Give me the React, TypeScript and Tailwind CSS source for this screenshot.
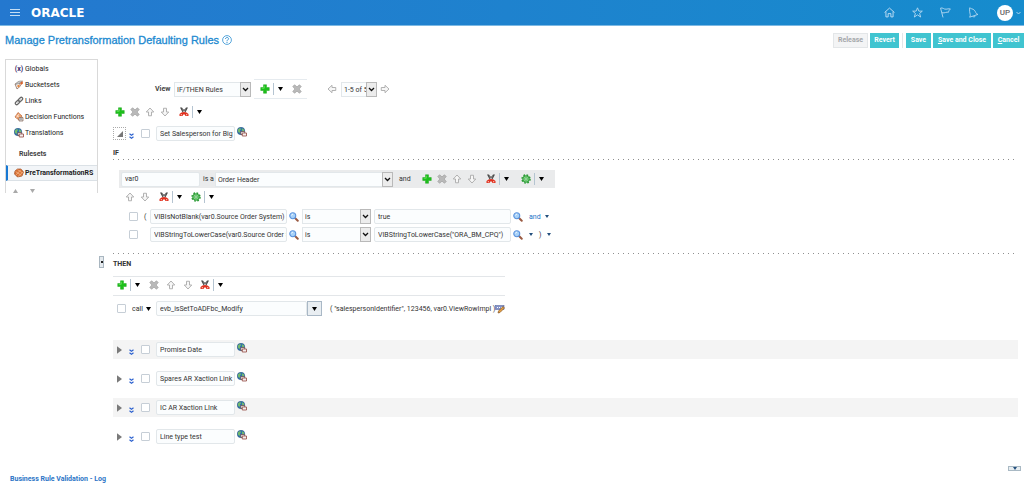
import type { ReactNode } from "react";
import clsx from "clsx";

type IconProps = { className?: string };

/* ---------- icons ---------- */

const PlusIcon = () => (
  <svg viewBox="0 0 20 20" className="size-2.5">
    <path
      d="M7 1.500h6V7h5.500v6H13v5.500H7V13H1.500V7H7z"
      fill="#1cc01a"
      stroke="#22a522"
      strokeWidth="1"
      strokeLinejoin="round"
    />
    <path d="M8.500 3.500v5h-5" fill="none" stroke="#6fe565" strokeWidth="1.6" />
  </svg>
);

const DeleteIcon = () => (
  <svg viewBox="0 0 20 20" className="size-2.5">
    <path
      d="M1.500 5L5 1.500l5 4.200 5-4.200L18.500 5l-4.200 5 4.200 5-3.500 3.500-5-4.200-5 4.200L1.500 15l4.200-5z"
      fill="#b9b9b9"
      stroke="#8f8f8f"
      strokeWidth="1"
    />
  </svg>
);

const ArrowIcon = ({ className }: IconProps) => (
  <svg viewBox="0 0 20 20" className={clsx("size-2.5", className)}>
    <path
      d="M10 2l7.5 8H13v7.5H7V10H2.5z"
      fill="#f7f7f7"
      stroke="#a9a9a9"
      strokeWidth="1.8"
      strokeLinejoin="round"
    />
  </svg>
);

const ScissorsIcon = () => (
  <svg viewBox="0 0 20 20" className="size-2.5">
    <path d="M2 1h4l6.500 10-4 2.500zM18 1h-4L7.500 11l4 2.500z" fill="#4c4c4c" />
    <path d="M7 4h6v3H7z" fill="#8a8a8a" />
    <path d="M1 18v-4l4-3 5-1 5 1 4 3v4h-6l-1.500-3h-3L7 18z" fill="#e0301e" />
    <path d="M3.500 14.500h2.500v2H3.500zM14 14.500h2.500v2H14z" fill="#ffd8d0" />
  </svg>
);

const GearIcon = () => (
  <svg viewBox="0 0 20 20" className="size-2.5">
    <circle
      cx="10"
      cy="10"
      r="8"
      fill="none"
      stroke="#2a9a34"
      strokeWidth="3"
      strokeDasharray="3.4 2.9"
    />
    <circle cx="10" cy="10" r="6.5" fill="#7fd483" stroke="#2a9a34" strokeWidth="2" />
    <circle cx="10" cy="10" r="2.4" fill="#e6f8e6" stroke="#2a9a34" strokeWidth="1.2" />
  </svg>
);

const SearchIcon = () => (
  <svg viewBox="0 0 20 20" className="size-2.5">
    <path d="M12 12l5.5 5.5" stroke="#9a5a42" strokeWidth="4" strokeLinecap="round" />
    <circle cx="7.5" cy="7.5" r="6" fill="#a9d2f8" stroke="#5b93dd" strokeWidth="2.2" />
    <path d="M5 7a3 3 0 013-2.6" fill="none" stroke="#fff" strokeWidth="1.5" />
  </svg>
);

const GlobeIcon = () => (
  <svg viewBox="0 0 20 20" className="size-2.5 shrink-0">
    <circle cx="8" cy="8" r="7.500" fill="#2f72ad" stroke="#24527d" strokeWidth="1" />
    <path d="M2 5c3-4 6-3 6-1s-3 2-2 5-3 3-4 0zM10 3c3 0 5 3 4 5s-4 0-4-2z" fill="#74bd6a" />
    <path d="M7.500 9h8v6h-8z" fill="#e9e4e4" stroke="#6a4545" strokeWidth="1.4" />
    <path d="M10.500 12H19v6h-8.500z" fill="#f4eeee" stroke="#93463f" strokeWidth="1.6" />
  </svg>
);

const BucketIcon = () => (
  <svg viewBox="0 0 20 20" className="size-2.5 shrink-0">
    <path d="M2 8l8-4 3 8-7 6z" fill="#eee" stroke="#8b5e4a" strokeWidth="1.4" />
    <path d="M3 9c2-5 7-8 14-7l-5 4z" fill="#c7c7c7" stroke="#777" />
    <path d="M12 6l5-4 1 5-4 3z" fill="#d6602b" />
    <circle cx="9" cy="12" r="2.4" fill="#e8873d" />
  </svg>
);

const LinkIcon = () => (
  <svg viewBox="0 0 20 20" className="size-2.5 shrink-0">
    <g fill="none" stroke="#686868" strokeWidth="2.4">
      <rect x="-5" y="-2.8" width="10" height="5.6" rx="2.8" transform="translate(7 13) rotate(-45)" />
      <rect x="-5" y="-2.8" width="10" height="5.6" rx="2.8" transform="translate(13 7) rotate(-45)" />
    </g>
    <path d="M7 13l6-6" stroke="#999" strokeWidth="1.6" />
  </svg>
);

const DecisionIcon = () => (
  <svg viewBox="0 0 20 20" className="size-2.5 shrink-0">
    <path d="M8 1l8 7-6 8-8-6z" fill="#eea16c" stroke="#b96333" strokeWidth="1.4" />
    <path d="M5 6l7 6M10 4l-5 7" stroke="#fff" strokeWidth="1.2" />
    <path d="M10 11h8v7h-8z" fill="#ddd" stroke="#7a5a4a" strokeWidth="1.3" />
    <path d="M12 14h4" stroke="#555" strokeWidth="1.3" />
  </svg>
);

const RulesetIcon = () => (
  <svg viewBox="0 0 20 20" className="size-2.5 shrink-0">
    <path d="M7 2h7l5 6-3 8-9 2-6-6 1-6z" fill="#d97337" stroke="#994318" strokeWidth="1.3" />
    <path d="M3 7l12 8M7 3l10 7M14 3L4 14M18 8L8 17" stroke="#ffd2ab" strokeWidth="1" />
  </svg>
);

const EditIcon = () => (
  <svg viewBox="0 0 20 20" className="size-2.5">
    <rect x="1" y="3" width="17" height="8" fill="#8493c9" stroke="#4b5993" />
    <path d="M4 6h2v2H4zM8 6h2v2H8zM12 6h2v2h-2z" fill="#fff" />
    <path d="M16 5l3 3-9 9-4 1 1-4z" fill="#e5a043" stroke="#74451a" strokeWidth="1.2" />
  </svg>
);

const DoubleChevron = () => (
  <svg viewBox="0 0 10 12" className="h-1.5 w-[5px]">
    <path d="M1 1.500L5 4.500l4-3M1 7.500l4 3 4-3" fill="none" stroke="#2d62cf" strokeWidth="2.4" />
  </svg>
);

const Caret = ({ className }: IconProps) => (
  <svg viewBox="0 0 10 8" className={clsx("h-1 w-[5px]", className)}>
    <path d="M0 0h10L5 8z" fill="currentColor" />
  </svg>
);

const SmallCaret = () => (
  <svg viewBox="0 0 8 6" className="h-[3px] w-1 text-[#234f7d]">
    <path d="M0 0h8L4 6z" fill="currentColor" />
  </svg>
);

/* ---------- controls ---------- */

function IconButton({ label, children, className }: { label: string; children: ReactNode; className?: string }) {
  return (
    <button type="button" aria-label={label} className={clsx("flex shrink-0 items-center justify-center", className)}>
      {children}
    </button>
  );
}

function MenuButton({ label, children }: { label: string; children: ReactNode }) {
  return (
    <div className="flex shrink-0 items-center">
      <IconButton label={label}>{children}</IconButton>
      <span className="ml-[3px] h-3 w-px bg-[#b5c4d1]" />
      <IconButton label={`${label} menu`} className="ml-1">
        <Caret className="text-black" />
      </IconButton>
    </div>
  );
}

function Field({ label, value, className }: { label: string; value: string; className: string }) {
  return (
    <input
      aria-label={label}
      defaultValue={value}
      className={clsx(
        "h-[15px] shrink-0 rounded-xs border border-[#e2e7ea] bg-[#fbfdfe] pl-[3px] leading-[13px] text-[#333] outline-none",
        className
      )}
    />
  );
}

function Dropdown({ label, value, className }: { label: string; value: string; className: string }) {
  return (
    <div className={clsx("relative flex h-[15px] shrink-0", className)}>
      <select
        aria-label={label}
        className="h-full w-full appearance-none border border-[#e2e7ea] bg-[#fbfdfe] pt-px pr-0 pl-0.5 leading-3 text-[#333] outline-none"
      >
        <option>{value}</option>
      </select>
      <span className="pointer-events-none absolute inset-y-0 right-0 flex w-[11px] items-center justify-center border border-[#b9b9b9] bg-[#ececec]">
        <svg viewBox="0 0 14 10" className="h-[5px] w-[7px]">
          <path d="M2 2l5 5 5-5" fill="none" stroke="#111" strokeWidth="2.6" />
        </svg>
      </span>
    </div>
  );
}

function Check({ label, className }: { label: string; className?: string }) {
  return (
    <input
      type="checkbox"
      aria-label={label}
      className={clsx("size-[9px] shrink-0 appearance-none rounded-[1px] border border-[#c6ced6] bg-white", className)}
    />
  );
}

const Dots = () => (
  <div className="h-px bg-[linear-gradient(to_right,#8f8f8f_1px,transparent_1px)] bg-[length:5px_1px]" />
);

/* ---------- data ---------- */

const navItems = [
  { label: "Globals", icon: <span className="w-2.5 text-center font-bold text-[#3b2a6b]">(x)</span> },
  { label: "Bucketsets", icon: <BucketIcon /> },
  { label: "Links", icon: <LinkIcon /> },
  { label: "Decision Functions", icon: <DecisionIcon /> },
  { label: "Translations", icon: <GlobeIcon /> },
];

const rules = ["Promise Date", "Spares AR Xaction Link", "IC AR Xaction LInk", "Line type test"];

/* ---------- page parts ---------- */

function Header() {
  return (
    <header className="flex h-[26px] items-center border-b border-[#7db9e3] bg-linear-to-r from-[#2478cf] to-[#168ccd] pr-[3px] pl-2.5 text-white">
      <button type="button" aria-label="Navigator" className="flex w-2.5 flex-col gap-0.5">
        <span className="h-px bg-[#c5def4]" />
        <span className="h-px bg-[#c5def4]" />
        <span className="h-px bg-[#c5def4]" />
      </button>
      <a href="#" className="ml-[11px] font-['DejaVu_Sans',sans-serif] text-[12px] leading-3 font-bold">
        ORACLE
      </a>
      <div className="ml-auto flex items-center">
        <div className="flex gap-[17px]">
          <IconButton label="Home">
            <svg viewBox="0 0 20 20" className="size-[11px]">
              <path
                d="M1 10l9-8 9 8M3.500 8.500V18H7.500v-6h5v6h4V8.500"
                fill="none"
                stroke="#b9dbf3"
                strokeWidth="1.8"
              />
            </svg>
          </IconButton>
          <IconButton label="Favorites">
            <svg viewBox="0 0 20 20" className="size-[11px]">
              <path
                d="M10 1.5l2.5 6h6.3l-5 4.2 2 6.6-5.8-4-5.8 4 2-6.6-5-4.2h6.3z"
                fill="none"
                stroke="#b9dbf3"
                strokeWidth="1.6"
              />
            </svg>
          </IconButton>
          <IconButton label="Watchlist">
            <svg viewBox="0 0 20 20" className="size-[11px]">
              <path
                d="M5.5 19L1 2c4-1.500 6 2.500 10 2 2.500-.3 4-1 8-.5-2 2-3 3-3.500 6-4-1-6 2-12 1"
                fill="none"
                stroke="#b9dbf3"
                strokeWidth="1.6"
              />
            </svg>
          </IconButton>
          <IconButton label="Notifications">
            <svg viewBox="0 0 20 20" className="size-[11px]">
              <path
                d="M3 1.500c1 0 1.500 1 3 1.500 5 1 7 4 8 7 .5 2 2 2.500 4 3.500L3 18.500c1-2 1.500-3 1-5C3 10 2.500 6 3 1.500zM9 17c1 2 3 2 4-.8"
                fill="none"
                stroke="#b9dbf3"
                strokeWidth="1.6"
              />
            </svg>
          </IconButton>
        </div>
        <button type="button" aria-label="User menu" className="ml-[18px] flex items-center gap-[3px]">
          <span className="flex size-4 items-center justify-center rounded-full bg-white text-[8px] font-medium text-[#666]">
            UP
          </span>
          <svg viewBox="0 0 10 8" className="h-1 w-[5px]">
            <path d="M1 2l4 4 4-4" fill="none" stroke="#b9dbf3" strokeWidth="1.8" />
          </svg>
        </button>
      </div>
    </header>
  );
}

function TitleBar() {
  const action = "h-[15px] bg-[#40c4d0] text-white font-bold";
  return (
    <div className="flex h-7 items-center pl-[5px]">
      <h1 className="font-['Liberation_Sans',Arial,sans-serif] text-[11px] text-[#2189d0] [-webkit-text-stroke:0.3px_#2189d0]">
        Manage Pretransformation Defaulting Rules
      </h1>
      <button type="button" aria-label="Help" className="ml-[3px]">
        <svg viewBox="0 0 20 20" className="size-2.5">
          <circle cx="10" cy="10" r="8.800" fill="none" stroke="#2189d0" strokeWidth="1.5" />
          <path d="M7 8c0-4 6-4 6-.5 0 2-3 2.500-3 5M10 14v2" fill="none" stroke="#2189d0" strokeWidth="1.8" />
        </svg>
      </button>
      <div className="ml-auto flex items-center gap-0.5">
        <button type="button" disabled className="h-[15px] w-[35px] border border-[#e3e6e8] bg-[#f3f4f5] font-bold text-[#a5a8ab]">
          Release
        </button>
        <button type="button" className={clsx(action, "w-[29px]")}>
          Revert
        </button>
        <span className="mx-px h-[15px] w-px bg-[#e3e6e8]" />
        <button type="button" className={clsx(action, "w-[25px]")}>
          Save
        </button>
        <button type="button" className={clsx(action, "w-[58px]")}>
          <u>S</u>ave and Close
        </button>
        <button type="button" className={clsx(action, "w-[31px]")}>
          <u>C</u>ancel
        </button>
      </div>
    </div>
  );
}

function Sidebar() {
  return (
    <nav className="mt-[5px] ml-[5px] h-[134px] w-[93px] shrink-0 overflow-hidden border border-b-0 border-[#d9d9d9] text-[#222]">
      <ul>
        {navItems.map((item) => (
          <li key={item.label} className="h-4 pt-px">
            <a href="#" className="flex h-4 items-center gap-px pl-2">
              {item.icon}
              {item.label}
            </a>
          </li>
        ))}
      </ul>
      <p className="mt-1.5 flex h-4 items-center pl-[13px] font-bold text-[#444]">Rulesets</p>
      <a
        href="#"
        className="mt-[3px] flex h-4 items-center gap-px border-y border-l-2 border-y-[#dbe1e6] border-l-[#1778d3] bg-[#f2f5f8] pl-1.5 font-bold whitespace-nowrap"
      >
        <RulesetIcon />
        PreTransformationRS
      </a>
      <div className="mt-2 flex gap-3 pl-[7px] text-[#a9a9a9]">
        <IconButton label="Move up">
          <Caret className="rotate-180" />
        </IconButton>
        <IconButton label="Move down">
          <Caret />
        </IconButton>
      </div>
    </nav>
  );
}

function ViewBar() {
  return (
    <div className="flex h-5 items-center pl-[42px]">
      <span className="w-[19px] font-bold text-[#444]">View</span>
      <Dropdown label="View" value="IF/THEN Rules" className="w-[77px]" />
      <div className="ml-[3px] flex h-5 w-[53px] items-center gap-[9px] border-y border-[#e6ebef] pl-1.5">
        <MenuButton label="Add rule">
          <PlusIcon />
        </MenuButton>
        <IconButton label="Delete rule">
          <DeleteIcon />
        </IconButton>
      </div>
      <IconButton label="Previous page" className="ml-5">
        <ArrowIcon className="-rotate-90" />
      </IconButton>
      <Dropdown label="Page" value="1-5 of 5" className="ml-1 w-9" />
      <IconButton label="Next page" className="ml-[3px]">
        <ArrowIcon className="rotate-90" />
      </IconButton>
    </div>
  );
}

function MoveButtons() {
  return (
    <>
      <IconButton label="Move up">
        <ArrowIcon />
      </IconButton>
      <IconButton label="Move down">
        <ArrowIcon className="rotate-180" />
      </IconButton>
    </>
  );
}

function EditTools() {
  return (
    <>
      <IconButton label="Add">
        <PlusIcon />
      </IconButton>
      <IconButton label="Delete">
        <DeleteIcon />
      </IconButton>
      <MoveButtons />
    </>
  );
}

function RuleRow({ name, open, shaded }: { name: string; open?: boolean; shaded?: boolean }) {
  return (
    <div className={clsx("flex h-[19px] items-center", shaded && "bg-[#f4f4f4]")}>
      <IconButton
        label={open ? "Collapse rule" : "Expand rule"}
        className={clsx("h-[13px] w-[13px]", open && "border border-dotted border-[#aaa]")}
      >
        {open ? (
          <svg viewBox="0 0 10 10" className="size-1.5">
            <path d="M10 0v10H0z" fill="#777" />
          </svg>
        ) : (
          <svg viewBox="0 0 8 12" className="h-2 w-[5px]">
            <path d="M0 0l8 6-8 6z" fill="#7a7a7a" />
          </svg>
        )}
      </IconButton>
      <IconButton label="Show advanced settings" className="mt-1 ml-[3px]">
        <DoubleChevron />
      </IconButton>
      <Check label={`Select ${name}`} className="ml-[7px]" />
      <Field label="Rule name" value={name} className="ml-1.5 w-[79px]" />
      <IconButton label="Translate" className="mb-[3px] ml-0.5">
        <GlobeIcon />
      </IconButton>
    </div>
  );
}

function Condition({ left, right, open, children }: { left: string; right: string; open: string; children: ReactNode }) {
  return (
    <div className="flex h-[17px] items-center pl-4">
      <Check label="Select condition" />
      <span className="w-3 pl-1.5">{open}</span>
      <Field label="Left operand" value={left} className="w-[137px]" />
      <IconButton label="Find left operand" className="ml-0.5">
        <SearchIcon />
      </IconButton>
      <Dropdown label="Operator" value="is" className="ml-[3px] w-[69px]" />
      <Field label="Right operand" value={right} className="ml-[3px] w-[137px]" />
      <IconButton label="Find right operand" className="ml-0.5">
        <SearchIcon />
      </IconButton>
      {children}
    </div>
  );
}

function IfSection() {
  return (
    <section>
      <h2 className="flex h-4 items-end pb-px font-bold">IF</h2>
      <Dots />
      <div className="mt-2.5 ml-1.5 flex h-[18px] w-[436px] items-center bg-[#eaebec] pl-0.5">
        <Field label="Variable" value="var0" className="w-[79px]" />
        <span className="w-[15px] pl-[3px] whitespace-nowrap">is a</span>
        <Dropdown label="Fact type" value="Order Header" className="w-[178px]" />
        <span className="w-[29px] pl-1.5">and</span>
        <div className="flex items-center gap-[5px]">
          <EditTools />
          <div className="ml-1 flex gap-3">
            <MenuButton label="Cut">
              <ScissorsIcon />
            </MenuButton>
            <MenuButton label="Settings">
              <GearIcon />
            </MenuButton>
          </div>
        </div>
      </div>
      <div className="flex h-[17px] items-center gap-[5px] pl-3">
        <MoveButtons />
        <div className="ml-1 flex gap-[9px]">
          <MenuButton label="Cut">
            <ScissorsIcon />
          </MenuButton>
          <MenuButton label="Settings">
            <GearIcon />
          </MenuButton>
        </div>
      </div>
      <div className="mt-[3px] mb-2.5 flex flex-col gap-px">
        <Condition left="VIBIsNotBlank(var0.Source Order System)" right="true" open="(">
          <button type="button" className="ml-1.5 flex items-center gap-1 text-[#2173c7]">
            and
            <SmallCaret />
          </button>
        </Condition>
        <Condition left="VIBStringToLowerCase(var0.Source Order S" right={'VIBStringToLowerCase("ORA_BM_CPQ")'} open="">
          <div className="ml-1.5 flex items-center gap-1.5">
            <IconButton label="Connective">
              <SmallCaret />
            </IconButton>
            )
            <IconButton label="Parenthesis">
              <SmallCaret />
            </IconButton>
          </div>
        </Condition>
      </div>
      <Dots />
    </section>
  );
}

function ThenSection() {
  return (
    <section className="mt-0.5">
      <h2 className="flex h-4 items-center font-bold">THEN</h2>
      <div className="mt-1 flex h-5 w-[392px] items-center border-y border-[#e3e6e9] pb-[3px] pl-1">
        <MenuButton label="Add action">
          <PlusIcon />
        </MenuButton>
        <div className="ml-[9px] flex gap-[7px]">
          <IconButton label="Delete">
            <DeleteIcon />
          </IconButton>
          <MoveButtons />
          <MenuButton label="Cut">
            <ScissorsIcon />
          </MenuButton>
        </div>
      </div>
      <div className="mt-1 flex h-[17px] items-center pl-1">
        <Check label="Select action" />
        <button type="button" className="ml-1.5 flex w-[24px] items-center gap-[3px]">
          call
          <Caret className="text-black" />
        </button>
        <Field label="Function" value="evb_isSetToADFbc_Modify" className="w-[151px]" />
        <IconButton label="Choose function" className="h-[15px] w-[15px] border border-[#a9b8c6] bg-[#e9eef2]">
          <Caret className="text-black" />
        </IconButton>
        <span className="ml-2 whitespace-nowrap">( "salespersonIdentifier", 123456, var0.ViewRowImpl )</span>
        <IconButton label="Edit arguments">
          <EditIcon />
        </IconButton>
      </div>
    </section>
  );
}

export default function App() {
  return (
    <div className="bg-white font-[Roboto,'Liberation_Sans',sans-serif] text-[7px] leading-[10px] text-[#333]">
      <Header />
      <TitleBar />
      <div className="flex">
        <Sidebar />
        <button
          type="button"
          aria-label="Collapse pane"
          className="mt-[202px] ml-px flex h-3 w-[5px] shrink-0 items-center justify-center border border-[#a9b6c0] bg-[#e5eaee]"
        >
          <span className="size-0.5 bg-[#222]" />
        </button>
        <main className="mr-1.5 ml-[9px] min-w-0 flex-1 pt-[25px]">
          <ViewBar />
          <div className="mt-[3px] flex h-5 items-center gap-[5px] pl-0.5">
            <EditTools />
            <div className="ml-1">
              <MenuButton label="Cut">
                <ScissorsIcon />
              </MenuButton>
            </div>
          </div>
          <div className="mt-0.5">
            <RuleRow name="Set Salesperson for Big M" open />
          </div>
          <IfSection />
          <ThenSection />
          <div className="mt-[23px] flex flex-col gap-[10px]">
            {rules.map((rule, i) => (
              <RuleRow key={rule} name={rule} shaded={i % 2 === 0} />
            ))}
          </div>
        </main>
      </div>
      <footer className="mt-5 pb-px">
        <div className="flex justify-end pr-[3px]">
          <button
            type="button"
            aria-label="Expand log"
            className="flex h-[5px] w-[13px] items-center justify-center border border-[#a9b9c4] bg-[#e7edf0]"
          >
            <SmallCaret />
          </button>
        </div>
        <a href="#" className="mt-[3px] ml-2.5 block w-fit font-bold text-[#2b74c6]">
          Business Rule Validation - Log
        </a>
      </footer>
    </div>
  );
}
